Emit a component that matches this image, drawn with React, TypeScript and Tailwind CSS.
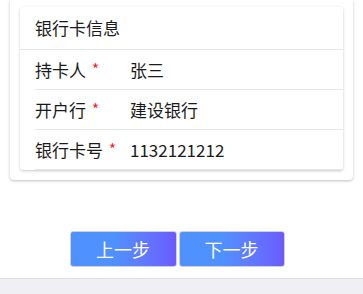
import React from 'react';

const rows = [
  { label: '持卡人', value: '张三' },
  { label: '开户行', value: '建设银行' },
  { label: '银行卡号', value: '1132121212' },
];

const App: React.FC = () => {
  return (
    <div
      className="w-full h-[294px] flex flex-col bg-white text-[#1a1a1a]"
      style={{ fontFamily: '"Noto Sans CJK SC", "Noto Sans", sans-serif' }}
    >
      <div className="mx-[10px] px-[10px] pt-[7px] pb-[10px] bg-white rounded-b-[4px] shadow-[0_1px_3px_rgba(0,0,0,0.25)]">
        <div className="bg-white rounded-[3px] shadow-[0_1px_3px_rgba(0,0,0,0.22)]">
          <div className="h-[43px] px-[15px] flex items-center border-b border-[#e6e6e6] text-[17px]">
            银行卡信息
          </div>
          {rows.map(row => (
            <div key={row.label} className="ml-[15px] h-[40px] flex items-center border-b border-[#e6e6e6] text-[17px]">
              <div className="w-[95px] flex items-center">
                <span>{row.label}</span>
                <span className="ml-[6px] text-[15px] leading-none text-[#f51c1c] -mt-[3px]">*</span>
              </div>
              <span>{row.value}</span>
            </div>
          ))}
        </div>
      </div>

      <div className="mt-[51px] flex justify-center pr-[9px] gap-[2px]">
        <button className="w-[107px] h-[36px] rounded-[3px] border border-[#cfcfd6] bg-linear-to-r from-[#4f91ff] from-40% to-[#6a5bff] text-white text-[18px]">
          上一步
        </button>
        <button className="w-[106px] h-[36px] rounded-[3px] border border-[#cfcfd6] bg-linear-to-r from-[#4f91ff] from-40% to-[#6a5bff] text-white text-[18px]">
          下一步
        </button>
      </div>

      <div className="mt-auto h-[16px] bg-[#efeff4] border-t border-[#e0e0e6]" />
    </div>
  );
};

export default App;
